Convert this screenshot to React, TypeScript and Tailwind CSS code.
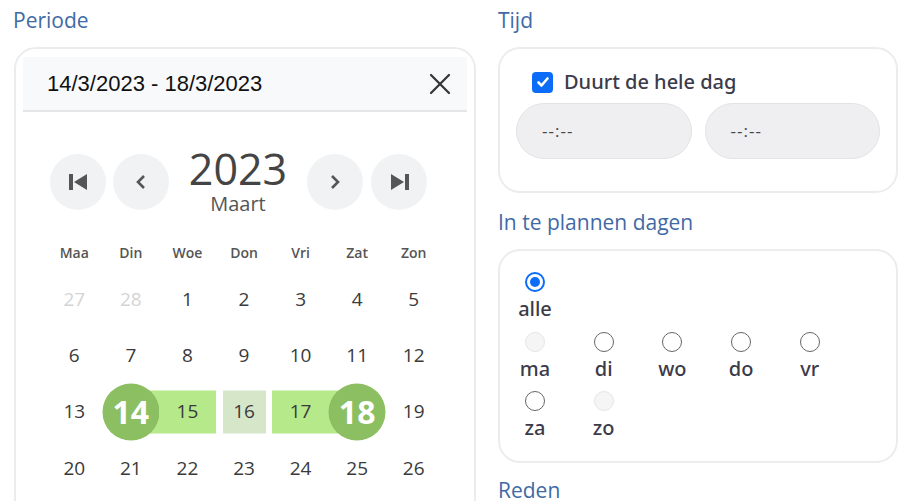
import React from "react";

const os = { fontFamily: '"Open Sans", "Noto Sans", sans-serif' };
const noto = { fontFamily: '"Noto Sans", "Open Sans", sans-serif' };

type Day = { n: number; muted?: boolean; kind?: "start" | "end" | "mid" | "off" };

const rows: Day[][] = [
  [{ n: 27, muted: true }, { n: 28, muted: true }, { n: 1 }, { n: 2 }, { n: 3 }, { n: 4 }, { n: 5 }],
  [{ n: 6 }, { n: 7 }, { n: 8 }, { n: 9 }, { n: 10 }, { n: 11 }, { n: 12 }],
  [{ n: 13 }, { n: 14, kind: "start" }, { n: 15, kind: "mid" }, { n: 16, kind: "off" }, { n: 17, kind: "mid" }, { n: 18, kind: "end" }, { n: 19 }],
  [{ n: 20 }, { n: 21 }, { n: 22 }, { n: 23 }, { n: 24 }, { n: 25 }, { n: 26 }],
];

function DayCell({ d }: { d: Day }) {
  const edge = d.kind === "start" || d.kind === "end";
  return (
    <div className="relative flex h-[56.3px] items-center justify-center">
      {d.kind === "start" && <div className="absolute left-1/2 right-0 top-1/2 h-[43px] -translate-y-1/2 bg-[#b5e98a]" />}
      {d.kind === "end" && <div className="absolute left-0 right-1/2 top-1/2 h-[43px] -translate-y-1/2 bg-[#b5e98a]" />}
      {d.kind === "mid" && <div className="absolute left-0 right-0 top-1/2 h-[43px] -translate-y-1/2 bg-[#b5e98a]" />}
      {d.kind === "off" && <div className="absolute left-[7px] right-[6px] top-1/2 h-[43px] -translate-y-1/2 bg-[#d6e6c8]" />}
      {edge && <div className="absolute left-1/2 top-1/2 h-[57px] w-[57px] -translate-x-1/2 -translate-y-1/2 rounded-full bg-[#8bbf62]" />}
      <span
        className={
          edge
            ? "relative text-[32px] font-bold leading-none text-white"
            : d.muted
            ? "relative text-[19px] text-[#d4d4d4]"
            : "relative text-[19px] text-[#3a3a3a]"
        }
      >
        {d.n}
      </span>
    </div>
  );
}

function NavButton({ children }: { children: React.ReactNode }) {
  return (
    <div className="flex h-[56px] w-[56px] items-center justify-center rounded-full bg-[#f1f2f4] text-[#555]">
      {children}
    </div>
  );
}

function Radio({ state }: { state: "on" | "off" | "disabled" }) {
  if (state === "on")
    return (
      <span className="flex h-[20px] w-[20px] items-center justify-center rounded-full border-2 border-[#0b6cf7] bg-white">
        <span className="h-[10px] w-[10px] rounded-full bg-[#0b6cf7]" />
      </span>
    );
  if (state === "disabled")
    return <span className="block h-[20px] w-[20px] rounded-full border border-[#e6e6e6] bg-[#f5f5f5]" />;
  return <span className="block h-[20px] w-[20px] rounded-full border-[1.5px] border-[#666] bg-white" />;
}

function Option({ label, state }: { label: string; state: "on" | "off" | "disabled" }) {
  return (
    <div className="flex w-[38px] flex-col items-center">
      <Radio state={state} />
      <span className="mt-[4px] text-[20px] font-medium leading-[26px] text-[#3b3b4a]" style={noto}>
        {label}
      </span>
    </div>
  );
}

export default function App() {
  return (
    <div className="h-[501px] overflow-hidden bg-white" style={os}>
      <div className="flex gap-[22px] px-[14px] pt-[6px]">
        {/* Periode */}
        <div className="w-[462px] shrink-0">
          <div className="-ml-px mb-[13px] text-[21px] leading-[28px] text-[#3f6aa6]">Periode</div>
          <div className="rounded-[22px] border-2 border-[#ececec] bg-white px-[7px] pt-[8px] pb-10">
            <div className="flex h-[55px] items-center justify-between border-b-2 border-[#e6e6e6] bg-[#f8f9fa] pl-[24px] pr-[16px]">
              <span className="text-[22px] text-[#111]" style={{ fontFamily: '"Liberation Sans", Arial, sans-serif' }}>
                14/3/2023 - 18/3/2023
              </span>
              <svg width="22" height="22" viewBox="0 0 22 22" fill="none" stroke="#333" strokeWidth="2.2" strokeLinecap="round">
                <path d="M2 2 L20 20 M20 2 L2 20" />
              </svg>
            </div>

            <div className="ml-[27px] mt-[35px] flex items-center">
              <NavButton>
                <svg width="19" height="16" viewBox="0 0 19 16" fill="#555">
                  <rect x="0" y="0" width="4" height="16" />
                  <path d="M18 0 L5 8 L18 16 Z" />
                </svg>
              </NavButton>
              <div className="ml-[7px]">
                <NavButton>
                  <svg width="12" height="16" viewBox="0 0 12 16" fill="none" stroke="#555" strokeWidth="2.6">
                    <path d="M9 2 L3 8 L9 14" />
                  </svg>
                </NavButton>
              </div>
              <div className="flex w-[138px] flex-col items-center">
                <span className="text-[43px] leading-[44px] text-[#444]">2023</span>
                <span className="mt-px text-[20px] leading-[24px] text-[#555]">Maart</span>
              </div>
              <NavButton>
                <svg width="12" height="16" viewBox="0 0 12 16" fill="none" stroke="#555" strokeWidth="2.6">
                  <path d="M3 2 L9 8 L3 14" />
                </svg>
              </NavButton>
              <div className="ml-[8px]">
                <NavButton>
                  <svg width="19" height="16" viewBox="0 0 19 16" fill="#555">
                    <path d="M1 0 L14 8 L1 16 Z" />
                    <rect x="15" y="0" width="4" height="16" />
                  </svg>
                </NavButton>
              </div>
            </div>

            <div className="ml-[23px] mt-[27px] w-[396px]">
              <div className="grid grid-cols-7 text-center text-[14px] font-semibold leading-[20px] text-[#555]">
                {["Maa", "Din", "Woe", "Don", "Vri", "Zat", "Zon"].map((w) => (
                  <div key={w}>{w}</div>
                ))}
              </div>
              <div className="mt-[8px]">
                {rows.map((r, i) => (
                  <div key={i} className="grid grid-cols-7">
                    {r.map((d, j) => (
                      <DayCell key={j} d={d} />
                    ))}
                  </div>
                ))}
              </div>
            </div>
          </div>
        </div>

        {/* rechterkolom */}
        <div className="w-[400px] shrink-0">
          <div className="mb-[13px] text-[21px] leading-[28px] text-[#3f6aa6]">Tijd</div>
          <div className="rounded-[22px] border-2 border-[#ececec] bg-white px-[16px] pt-[20px] pb-[32px]">
            <div className="flex h-[26px] items-center pl-[16px]">
              <span className="flex h-[21px] w-[21px] items-center justify-center rounded-[4px] bg-[#0b6cf7]">
                <svg width="14" height="14" viewBox="0 0 14 14" fill="none" stroke="white" strokeWidth="2.6" strokeLinecap="round" strokeLinejoin="round">
                  <path d="M2.5 7.5 L5.5 10.5 L11.5 3.5" />
                </svg>
              </span>
              <span className="ml-[11px] text-[20px] font-medium text-[#3b3b4a]" style={noto}>
                Duurt de hele dag
              </span>
            </div>
            <div className="mt-[8px] grid grid-cols-2 gap-[13px]">
              {[0, 1].map((k) => (
                <div key={k} className="flex h-[56px] items-center rounded-full border border-[#e3e3e3] bg-[#efeff1] pl-[25px] text-[17px] tracking-[1px] text-[#444]">
                  --:--
                </div>
              ))}
            </div>
          </div>

          <div className="mb-[13px] mt-[15px] text-[21px] leading-[28px] text-[#3f6aa6]">In te plannen dagen</div>
          <div className="rounded-[22px] border-2 border-[#ececec] bg-white px-[16px] pt-[21px] pb-[20px]">
            <Option label="alle" state="on" />
            <div className="mt-[9.5px] flex w-[364px] flex-wrap gap-x-[30.7px] gap-y-[9.5px]">
              <Option label="ma" state="disabled" />
              <Option label="di" state="off" />
              <Option label="wo" state="off" />
              <Option label="do" state="off" />
              <Option label="vr" state="off" />
              <Option label="za" state="off" />
              <Option label="zo" state="disabled" />
            </div>
          </div>

          <div className="mt-[13px] text-[21px] leading-[28px] text-[#3f6aa6]">Reden</div>
        </div>
      </div>
    </div>
  );
}
